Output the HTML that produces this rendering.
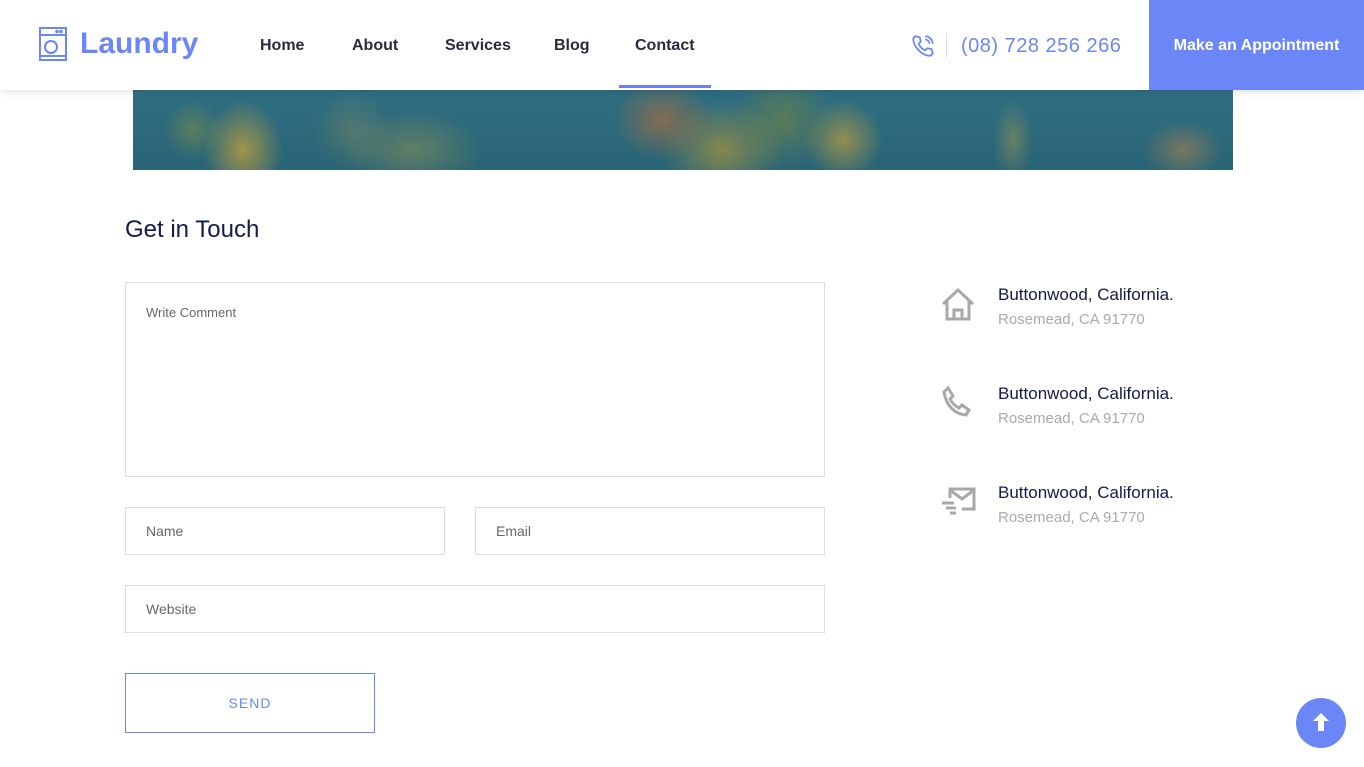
<!DOCTYPE html>
<html><head><meta charset="utf-8"><style>
*{box-sizing:border-box;margin:0;padding:0}
body{width:1364px;height:767px;overflow:hidden;background:#fff;font-family:"Liberation Sans",sans-serif;position:relative}
.hdr{position:absolute;top:0;left:0;width:1364px;height:90px;background:#fff;box-shadow:0 2px 8px rgba(0,0,0,.12);z-index:2}
.logo{position:absolute;left:39px;top:27px;display:flex;align-items:center;color:#6b86f7;font-weight:bold;font-size:30px}
.nav a{position:absolute;top:37px;font-size:16px;color:#2a2a3a;text-decoration:none;font-weight:bold}
.ul{position:absolute;left:619px;top:85px;width:92px;height:3px;background:#6b7ff0}
.phone{position:absolute;left:961px;top:35px;font-size:20px;letter-spacing:.5px;color:#6b86f7}
.sep{position:absolute;left:946px;top:33px;width:1px;height:25px;background:#ddd}
.btn{position:absolute;left:1149px;top:0;width:215px;height:90px;background:#6b86f7;color:#fff;font-weight:bold;font-size:16px;display:flex;align-items:center;justify-content:center;padding-top:2px}
.map{position:absolute;left:133px;top:90px;width:1100px;height:80px;background:
radial-gradient(ellipse 40px 50px at 110px 60px,rgba(190,160,60,.8),transparent),
radial-gradient(ellipse 30px 30px at 60px 40px,rgba(120,140,70,.6),transparent),
radial-gradient(ellipse 70px 40px at 280px 60px,rgba(150,150,80,.5),transparent),
radial-gradient(ellipse 40px 40px at 220px 40px,rgba(140,140,90,.4),transparent),
radial-gradient(ellipse 50px 40px at 530px 30px,rgba(170,110,60,.7),transparent),
radial-gradient(ellipse 60px 50px at 590px 60px,rgba(170,150,60,.7),transparent),
radial-gradient(ellipse 50px 50px at 650px 30px,rgba(110,130,70,.7),transparent),
radial-gradient(ellipse 40px 40px at 710px 50px,rgba(190,160,60,.7),transparent),
radial-gradient(ellipse 40px 30px at 1050px 60px,rgba(170,130,80,.6),transparent),
radial-gradient(ellipse 20px 40px at 880px 50px,rgba(160,150,80,.5),transparent),
linear-gradient(#2f6f82,#2a6476)}
h2{position:absolute;left:125px;top:216px;font-size:24px;font-weight:normal;color:#131a4d}
.f{position:absolute;border:1px solid #ddd;font-size:14px;color:#666;padding-left:20px}
.send{position:absolute;left:125px;top:673px;width:250px;height:60px;border:1px solid #6b86f7;color:#6b86f7;font-size:14px;letter-spacing:1px;display:flex;align-items:center;justify-content:center}
.ci{position:absolute;left:998px}
.ci b{display:block;font-weight:normal;font-size:17px;color:#131a4d}
.ci span{display:block;font-size:15px;color:#aaa;margin-top:6px}
.ic{position:absolute;left:940px}
.top{position:absolute;left:1296px;top:698px;width:50px;height:50px;border-radius:50%;background:#6b86f7}
</style></head><body>
<div class="hdr">
 <div class="logo"><svg width="28" height="34" viewBox="0 0 28 34" fill="none" stroke="#6b86f7" stroke-width="2"><rect x="1" y="1" width="26" height="32"/><line x1="1" y1="8" x2="27" y2="8"/><circle cx="12" cy="20" r="6"/><circle cx="22" cy="4.5" r=".8"/><circle cx="18" cy="4.5" r=".8"/><line x1="1" y1="29" x2="27" y2="29"/></svg><span style="margin-left:13px">Laundry</span></div>
 <div class="nav"><a style="left:260px">Home</a><a style="left:352px">About</a><a style="left:445px">Services</a><a style="left:554px">Blog</a><a style="left:635px">Contact</a></div>
 <div class="ul"></div>
 <svg style="position:absolute;left:910px;top:33px" width="26" height="26" viewBox="0 0 24 24" fill="none" stroke="#6b86f7" stroke-width="1.6"><path d="M5 3l4 1 1 4-2 2a12 12 0 0 0 6 6l2-2 4 1 1 4-2 2C11 21 3 13 3 5z"/><path d="M14 3a7 7 0 0 1 7 7M14 6a4 4 0 0 1 4 4"/></svg>
 <div class="sep"></div>
 <div class="phone">(08) 728 256 266</div>
 <div class="btn">Make an Appointment</div>
</div>
<div class="map"></div>
<h2>Get in Touch</h2>
<div class="f" style="left:125px;top:282px;width:700px;height:195px;padding-top:22px;font-size:13px">Write Comment</div>
<div class="f" style="left:125px;top:507px;width:320px;height:48px;line-height:46px">Name</div>
<div class="f" style="left:475px;top:507px;width:350px;height:48px;line-height:46px">Email</div>
<div class="f" style="left:125px;top:585px;width:700px;height:48px;line-height:46px">Website</div>
<div class="send">SEND</div>
<svg class="ic" style="top:287px" width="36" height="36" viewBox="0 0 36 36" fill="none" stroke="#a8a8a8" stroke-width="3"><path d="M3 17L18 3l15 14M7 14v18h22V14M14 32v-9h8v9"/></svg>
<div class="ci" style="top:285px"><b>Buttonwood, California.</b><span>Rosemead, CA 91770</span></div>
<svg class="ic" style="top:385px" width="36" height="36" viewBox="0 0 36 36" fill="none" stroke="#a8a8a8" stroke-width="3"><path d="M8 3l5 8-3 3c2 4 5 7 9 9l3-3 7 5-3 5C14 29 6 20 4 7z"/></svg>
<div class="ci" style="top:384px"><b>Buttonwood, California.</b><span>Rosemead, CA 91770</span></div>
<svg class="ic" style="top:486px" width="36" height="32" viewBox="0 0 36 32" fill="none" stroke="#a8a8a8" stroke-width="3"><path d="M10 12V3h24v20H22M10 4l12 9 12-9M2 17h12M6 22h10M10 27h6"/></svg>
<div class="ci" style="top:483px"><b>Buttonwood, California.</b><span>Rosemead, CA 91770</span></div>
<div class="top"><svg width="50" height="50" viewBox="0 0 50 50" fill="#fff"><path d="M25 15l8 8h-5v10h-6V23h-5z"/></svg></div>
</body></html>
